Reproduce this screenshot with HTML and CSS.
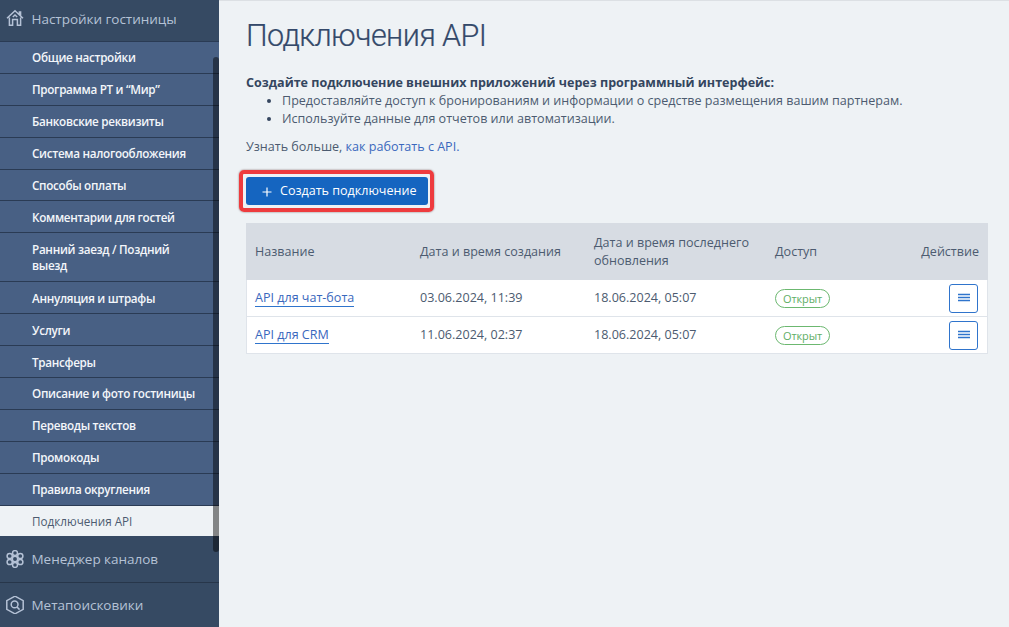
FILE: index.html
```
<!DOCTYPE html>
<html lang="ru">

<head>
    <meta charset="UTF-8" />
    <meta name="viewport" content="width=device-width, initial-scale=1.0" />
    <title>Подключения API</title>
    <link rel="stylesheet" href="styles.css">
</head>

<body>
    <aside class="sidebar">
        <div class="section section-first">
            <svg class="section-icon" viewBox="0 0 18 18">
                <path d="M1 9.2 9 1.8l8 7.4M13.4 5.4V3h1.2v3.4M3.4 8.4v7.8h3.2v-5.6h4.8v5.6h3.2V8.4M6.8 8 9 6l2.2 2" />
            </svg>
            <span>Настройки гостиницы</span>
        </div>
        <div class="submenu">
            <a class="item">Общие настройки</a>
            <a class="item">Программа РТ и “Мир”</a>
            <a class="item">Банковские реквизиты</a>
            <a class="item">Система налогообложения</a>
            <a class="item">Способы оплаты</a>
            <a class="item">Комментарии для гостей</a>
            <a class="item item-tall">Ранний заезд / Поздний выезд</a>
            <a class="item">Аннуляция и штрафы</a>
            <a class="item">Услуги</a>
            <a class="item">Трансферы</a>
            <a class="item">Описание и фото гостиницы</a>
            <a class="item">Переводы текстов</a>
            <a class="item">Промокоды</a>
            <a class="item">Правила округления</a>
            <a class="item active">Подключения API</a>
        </div>
        <div class="section section-channels">
            <svg class="section-icon" viewBox="0 0 18 18">
                <circle cx="9" cy="9" r="2.7" />
                <circle cx="9" cy="3.1" r="2.5" />
                <circle cx="9" cy="14.9" r="2.5" />
                <circle cx="3.7" cy="6" r="2.6" />
                <circle cx="14.3" cy="6" r="2.6" />
                <circle cx="3.7" cy="12" r="2.6" />
                <circle cx="14.3" cy="12" r="2.6" />
            </svg>
            <span>Менеджер каналов</span>
        </div>
        <div class="section section-meta">
            <svg class="section-icon" viewBox="0 0 18 18">
                <path d="M9 .2 17.2 4.6v8.8L9 17.8.8 13.4V4.6z" />
                <circle cx="8.6" cy="8.4" r="3.4" />
                <path d="m11 11 2.6 2.6" />
            </svg>
            <span>Метапоисковики</span>
        </div>
        <div class="scrollbar"></div>
    </aside>

    <main class="content">
        <h1>Подключения API</h1>
        <p class="lead">Создайте подключение внешних приложений через программный интерфейс:</p>
        <ul class="benefits">
            <li>Предоставляйте доступ к бронированиям и информации о средстве размещения вашим партнерам.</li>
            <li>Используйте данные для отчетов или автоматизации.</li>
        </ul>
        <p class="more">Узнать больше, <a>как работать с API.</a></p>

        <div class="highlight">
            <button class="create" type="button">
                <svg class="plus" viewBox="0 0 10 10">
                    <path d="M5 .5v9M.5 5h9" />
                </svg>
                <span>Создать подключение</span>
            </button>
        </div>

        <table class="connections">
            <thead>
                <tr>
                    <th class="col-name">Название</th>
                    <th class="col-created">Дата и время создания</th>
                    <th class="col-updated">Дата и время последнего обновления</th>
                    <th class="col-access">Доступ</th>
                    <th class="col-action">Действие</th>
                </tr>
            </thead>
            <tbody>
                <tr>
                    <td><a class="name">API для чат-бота</a></td>
                    <td>03.06.2024, 11:39</td>
                    <td>18.06.2024, 05:07</td>
                    <td><span class="badge">Открыт</span></td>
                    <td class="col-action">
                        <button class="menu" type="button">
                            <svg viewBox="0 0 12 10">
                                <path d="M0 1.5h12M0 4.5h12M0 7.5h12" />
                            </svg>
                        </button>
                    </td>
                </tr>
                <tr>
                    <td><a class="name">API для CRM</a></td>
                    <td>11.06.2024, 02:37</td>
                    <td>18.06.2024, 05:07</td>
                    <td><span class="badge">Открыт</span></td>
                    <td class="col-action">
                        <button class="menu" type="button">
                            <svg viewBox="0 0 12 10">
                                <path d="M0 1.5h12M0 4.5h12M0 7.5h12" />
                            </svg>
                        </button>
                    </td>
                </tr>
            </tbody>
        </table>
    </main>
</body>

</html>
```
FILE: styles.css
```
* {
    box-sizing: border-box;
}

body {
    margin: 0;
    display: flex;
    height: 627px;
    overflow: hidden;
    font-family: "Open Sans", sans-serif;
    font-size: 12.55px;
    line-height: 18px;
    color: #4c5b70;
    background-color: #eef2f5;
}

/* Sidebar */
.sidebar {
    position: relative;
    flex: none;
    width: 219px;
    background-color: #364a63;
}

.section {
    display: flex;
    align-items: center;
    gap: 8px;
    height: 45.5px;
    padding-left: 5.5px;
    font-size: 13.5px;
    font-weight: 500;
    letter-spacing: -0.03px;
    color: #b5c2d6;
}

.section-first {
    height: 41px;
    padding-bottom: 4px;
}

.section-meta {
    border-top: 1px solid #27364a;
}

.section-icon {
    width: 18px;
    height: 18px;
    margin-top: -1px;
    fill: none;
    stroke: #b5c2d6;
    stroke-width: 1.5;
}

.item {
    display: flex;
    align-items: center;
    height: 31.9px;
    padding: 0 20px 0 32px;
    border-top: 1px solid #2a3b54;
    background-color: #486084;
    color: #f3f6fa;
    font-size: 11.7px;
    font-weight: 600;
    letter-spacing: -0.3px;
    line-height: 16px;
}

.item-tall {
    height: 49px;
    padding-right: 45px;
}

.active {
    background-color: #eef2f5;
    color: #4c5b70;
    font-weight: 400;
    letter-spacing: 0;
}

.scrollbar {
    position: absolute;
    top: 57px;
    right: 0;
    width: 6px;
    height: 495px;
    border-radius: 3px;
    background-color: rgba(0, 0, 0, 0.45);
}

/* Content */
.content {
    flex: 1;
    padding: 17px 21px 0 27px;
    border-top: 1px solid #dce0e4;
}

h1 {
    margin: 0 0 20px;
    font-family: Roboto, sans-serif;
    font-size: 30.5px;
    font-weight: 300;
    letter-spacing: -0.6px;
    line-height: 36px;
    color: #34496a;
    -webkit-text-stroke: 0.2px #34496a;
}

.lead {
    margin: 0;
    font-weight: 700;
    color: #34465f;
}

.benefits {
    margin: 0 0 10px;
    padding-left: 36px;
}

.benefits li {
    height: 18px;
}

.benefits li::marker {
    color: #34465f;
}

.more {
    margin: 0 0 14px;
}

.more a {
    color: #3a68bd;
}

.highlight {
    width: 195px;
    height: 42px;
    margin: 0 0 11px -7px;
    padding: 3px;
    border: 4px solid #ee3b3e;
    border-radius: 5px;
    box-shadow: 0 0 2px rgba(60, 0, 0, 0.6);
}

.create {
    display: flex;
    align-items: center;
    gap: 8px;
    width: 182px;
    height: 28px;
    padding: 0 0 1px 16px;
    border: none;
    border-radius: 3px;
    background-color: #1565c0;
    color: #fff;
    font-family: inherit;
    font-size: 12.55px;
}

.plus {
    width: 10px;
    height: 10px;
    margin-top: 3px;
    fill: none;
    stroke: #fff;
    stroke-width: 1.2;
}

.connections {
    width: 742px;
    table-layout: fixed;
    border-collapse: separate;
    border-spacing: 0;
    background-color: #fff;
    box-shadow: inset 0 0 0 1px #dfe4ea;
}

th {
    height: 57px;
    padding: 0 9px;
    background-color: #d7dce3;
    font-weight: 400;
    text-align: left;
}

td {
    height: 37px;
    padding: 0 9px;
    border-bottom: 1px solid #dfe4ea;
}

.col-name {
    width: 165px;
}

.col-created {
    width: 174px;
}

.col-updated {
    width: 181px;
}

.col-access {
    width: 110px;
}

.col-action {
    text-align: right;
}

td.col-action {
    padding-right: 10px;
}

.name {
    border-bottom: 1px solid #2f74cc;
    color: #3a68bd;
}

.badge {
    display: inline-block;
    height: 19px;
    padding: 0 7px;
    border: 1px solid #6cb870;
    border-radius: 10px;
    color: #5fae66;
    font-size: 11px;
    letter-spacing: -0.1px;
    line-height: 18px;
    vertical-align: -1px;
}

.menu {
    display: inline-flex;
    align-items: center;
    justify-content: center;
    width: 29px;
    height: 29px;
    padding: 0;
    border: 1px solid #2f74cc;
    border-radius: 3px;
    background-color: #fff;
    vertical-align: middle;
}

.menu svg {
    width: 12px;
    height: 10px;
    stroke: #2f74cc;
    stroke-width: 1.3;
}
```
